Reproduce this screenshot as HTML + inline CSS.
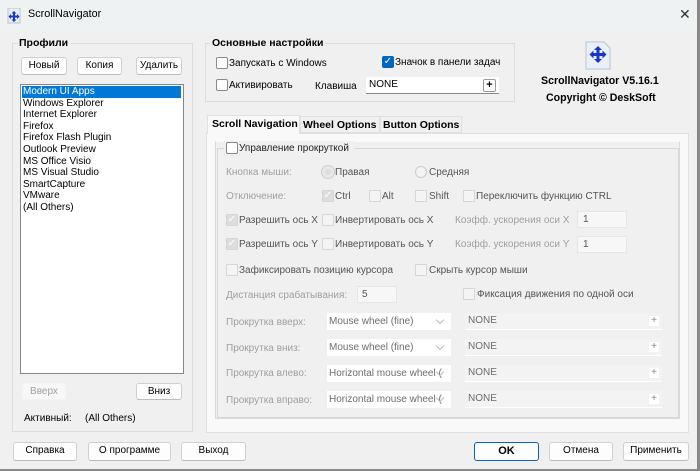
<!DOCTYPE html>
<html><head><meta charset="utf-8"><style>
*{box-sizing:border-box;margin:0;padding:0}
body{width:700px;height:471px;background:#f0f0f0;font-family:"Liberation Sans",sans-serif;font-size:10px;color:#000;position:relative;overflow:hidden}
.a{position:absolute;white-space:nowrap}
.btn{position:absolute;background:#fdfdfd;border:1px solid #d0d0d0;border-bottom-color:#bcbcbc;border-radius:3px;text-align:center;line-height:16px;font-size:10px}
.grp{position:absolute;border:1px solid #dcdcdc}
.lbl{position:absolute;background:#f0f0f0;font-weight:bold;font-size:10.5px;padding:0 2px}
.cb{position:absolute;width:12px;height:12px;border:1px solid #8a8a8a;background:#fff;border-radius:2px}
.cbd{position:absolute;width:12px;height:12px;border:1px solid #d6d6d6;background:#f4f4f4;border-radius:1px}
.g{color:#a0a0a0}
.d{color:#555}
.inp{position:absolute;background:#f7f7f7;border:1px solid #e6e6e6}
.combo{position:absolute;background:#fff;height:17px;width:124px;line-height:17px;padding-left:2px;color:#6d6d6d;overflow:hidden}
.combo:after{content:"";position:absolute;right:8px;top:4px;width:5px;height:5px;border-right:1px solid #bbb;border-bottom:1px solid #bbb;transform:rotate(45deg)}
.none{position:absolute;left:465px;width:197px;height:17px;background:#f3f3f3;border-bottom:1px solid #fff;line-height:16px;padding-left:3px;color:#6d6d6d}
.none b{position:absolute;right:3px;top:3px;width:10px;height:10px;background:#fff;font-weight:normal;font-size:10px;line-height:10px;text-align:center;color:#888}
.tab{position:absolute;font-weight:bold;font-size:10.5px}
</style></head><body>
<div class="a" style="left:0;top:0;width:700px;height:30px;background:#eef2f2"></div>
<svg class="a" style="left:7px;top:8px" width="14" height="16"><rect x="1" y="0" width="12" height="15" fill="#e8eef6" stroke="#b8c4d4"/><path d="M7 3l2.5 2.5h-1.5v2h2v-1.5l2.5 2.5-2.5 2.5v-1.5h-2v2h1.5L7 14l-2.5-2.5H6v-2H4v1.5L1.5 8.5 4 6v1.5h2v-2H4.5z" fill="#1637c8"/></svg>
<div class="a" style="left:28px;top:8px;font-size:10.8px">ScrollNavigator</div>
<div class="a" style="left:679px;top:6px;font-size:14px;color:#333">✕</div>
<div class="a" style="left:697px;top:0;width:3px;height:471px;background:#888"></div>
<div class="a" style="left:0;top:469px;width:700px;height:2px;background:#888"></div>

<div class="grp" style="left:12px;top:43px;width:181px;height:389px"></div>
<div class="lbl" style="left:17px;top:37px">Профили</div>
<div class="btn" style="left:21px;top:57px;width:46px;height:18px">Новый</div>
<div class="btn" style="left:77px;top:57px;width:45px;height:18px">Копия</div>
<div class="btn" style="left:136px;top:57px;width:46px;height:18px">Удалить</div>
<div class="a" style="left:20px;top:84px;width:164px;height:290px;background:#fff;border:1px solid #828790"></div>
<div class="a" style="left:22px;top:86px;width:159px;height:12px;background:#0078d7"></div>
<div class="a" style="left:23px;top:86px;line-height:11.6px">
<span style="color:#fff">Modern UI Apps</span><br>Windows Explorer<br>Internet Explorer<br>Firefox<br>Firefox Flash Plugin<br>Outlook Preview<br>MS Office Visio<br>MS Visual Studio<br>SmartCapture<br>VMware<br>(All Others)</div>
<div class="btn g" style="left:22px;top:383px;width:44px;height:17px;border-color:#f4f4f4;background:#f8f8f8">Вверх</div>
<div class="btn" style="left:136px;top:383px;width:46px;height:17px">Вниз</div>
<div class="a" style="left:24px;top:413px">Активный:</div>
<div class="a" style="left:85px;top:413px">(All Others)</div>

<div class="grp" style="left:205px;top:43px;width:310px;height:59px"></div>
<div class="lbl" style="left:210px;top:37px">Основные настройки</div>
<div class="cb" style="left:216px;top:57px"></div><div class="a" style="left:229px;top:58px">Запускать с Windows</div>
<div class="cb" style="left:216px;top:79px"></div><div class="a" style="left:229px;top:80px">Активировать</div>
<div class="a" style="left:315px;top:81px">Клавиша</div>
<div class="a" style="left:382px;top:56px;width:12px;height:12px;background:#0067c0;border-radius:2px;color:#fff;font-size:10px;line-height:12px;text-align:center">✓</div>
<div class="a" style="left:395px;top:57px">Значок в панели задач</div>
<div class="a" style="left:366px;top:77px;width:133px;height:17px;background:#fff;border-bottom:1px solid #888;line-height:16px;padding-left:3px">NONE</div>
<div class="a" style="left:483px;top:79px;width:13px;height:13px;border:1px solid #999;border-radius:2px;background:#fff;font-size:11px;line-height:11px;text-align:center;font-weight:bold">+</div>

<svg class="a" style="left:585px;top:41px" width="26" height="29"><path d="M1 1h18l6 6v21H1z" fill="#eaf0f8" stroke="#b8c4d4"/><path d="M13 5l4 4h-2.5v3h3V9.5l4 4-4 4V15h-3v3H17l-4 4-4-4h2.5v-3h-3v2.5l-4-4 4-4V12h3V9H9z" fill="#1637c8"/></svg>
<div class="a" style="left:541px;top:75px;font-weight:bold;font-size:10.6px">ScrollNavigator V5.16.1</div>
<div class="a" style="left:546px;top:92px;font-weight:bold;font-size:10.6px">Copyright © DeskSoft</div>

<div class="a" style="left:206px;top:133px;width:483px;height:300px;background:#f9f9f9;border:1px solid #e0e0e0"></div>
<div class="a" style="left:207px;top:115px;width:93px;height:19px;background:#f9f9f9;border:1px solid #e0e0e0;border-bottom:none"></div>
<div class="a" style="left:300px;top:116px;width:80px;height:17px;border:1px solid #e0e0e0"></div>
<div class="a" style="left:380px;top:116px;width:82px;height:17px;border:1px solid #e0e0e0"></div>
<div class="tab" style="left:212px;top:118px">Scroll Navigation</div>
<div class="tab" style="left:303px;top:119px">Wheel Options</div>
<div class="tab" style="left:383px;top:119px">Button Options</div>

<div class="a" style="left:215px;top:141px;width:465px;height:278px;background:#f0f0f0;border:1px solid #dadada;border-top-color:#f9f9f9"></div>
<div class="a" style="left:217px;top:148px;width:462px;height:270px;border:1px solid #d8d8d8"></div>
<div class="a" style="left:224px;top:141px;width:130px;height:14px;background:#f0f0f0"></div>
<div class="cb" style="left:226px;top:142px"></div><div class="a" style="left:239px;top:143px;color:#222">Управление прокруткой</div>

<div class="a g" style="left:226px;top:167px">Кнопка мыши:</div>
<div class="a" style="left:322px;top:166px;width:12px;height:12px;border-radius:50%;background:#ddd;border:3px solid #e8e8e8;box-shadow:0 0 0 1px #ccc"></div>
<div class="a d" style="left:335px;top:167px">Правая</div>
<div class="a" style="left:415px;top:166px;width:12px;height:12px;border-radius:50%;border:1px solid #ccc;background:#f4f4f4"></div>
<div class="a d" style="left:429px;top:167px">Средняя</div>

<div class="a g" style="left:226px;top:191px">Отключение:</div>
<div class="cbd" style="left:322px;top:190px;background:#ddd;color:#fff;font-size:10px;line-height:10px;text-align:center">✓</div><div class="a d" style="left:335px;top:191px">Ctrl</div>
<div class="cbd" style="left:369px;top:190px"></div><div class="a d" style="left:382px;top:191px">Alt</div>
<div class="cbd" style="left:415px;top:190px"></div><div class="a d" style="left:429px;top:191px">Shift</div>
<div class="cbd" style="left:463px;top:190px"></div><div class="a d" style="left:476px;top:191px">Переключить функцию CTRL</div>

<div class="cbd" style="left:226px;top:214px;background:#ddd;color:#fff;font-size:10px;line-height:10px;text-align:center">✓</div><div class="a d" style="left:239px;top:215px">Разрешить ось X</div>
<div class="cbd" style="left:322px;top:214px"></div><div class="a d" style="left:335px;top:215px">Инвертировать ось X</div>
<div class="a g" style="left:455px;top:215px">Коэфф. ускорения оси X</div>
<div class="inp d" style="left:577px;top:211px;width:50px;height:17px;padding:2px 5px">1</div>

<div class="cbd" style="left:226px;top:238px;background:#ddd;color:#fff;font-size:10px;line-height:10px;text-align:center">✓</div><div class="a d" style="left:239px;top:239px">Разрешить ось Y</div>
<div class="cbd" style="left:322px;top:238px"></div><div class="a d" style="left:335px;top:239px">Инвертировать ось Y</div>
<div class="a g" style="left:455px;top:239px">Коэфф. ускорения оси Y</div>
<div class="inp d" style="left:577px;top:236px;width:50px;height:17px;padding:2px 5px">1</div>

<div class="cbd" style="left:226px;top:264px"></div><div class="a d" style="left:239px;top:265px">Зафиксировать позицию курсора</div>
<div class="cbd" style="left:415px;top:264px"></div><div class="a d" style="left:429px;top:265px">Скрыть курсор мыши</div>

<div class="a g" style="left:226px;top:290px">Дистанция срабатывания:</div>
<div class="inp d" style="left:357px;top:286px;width:40px;height:17px;padding:2px 4px">5</div>
<div class="cbd" style="left:463px;top:288px"></div><div class="a d" style="left:477px;top:289px">Фиксация движения по одной оси</div>

<div class="a g" style="left:226px;top:317px">Прокрутка вверх:</div>
<div class="combo" style="left:327px;top:313px">Mouse wheel (fine)</div>
<div class="none" style="top:313px">NONE<b>+</b></div>
<div class="a g" style="left:226px;top:343px">Прокрутка вниз:</div>
<div class="combo" style="left:327px;top:339px">Mouse wheel (fine)</div>
<div class="none" style="top:339px">NONE<b>+</b></div>
<div class="a g" style="left:226px;top:368px">Прокрутка влево:</div>
<div class="combo" style="left:327px;top:365px">Horizontal mouse wheel (</div>
<div class="none" style="top:365px">NONE<b>+</b></div>
<div class="a g" style="left:226px;top:395px">Прокрутка вправо:</div>
<div class="combo" style="left:327px;top:391px">Horizontal mouse wheel (</div>
<div class="none" style="top:391px">NONE<b>+</b></div>

<div class="btn" style="left:13px;top:442px;width:64px;height:19px">Справка</div>
<div class="btn" style="left:88px;top:442px;width:83px;height:19px">О программе</div>
<div class="btn" style="left:181px;top:442px;width:65px;height:19px">Выход</div>
<div class="btn" style="left:474px;top:442px;width:65px;height:19px;border:1px solid #0067c0;font-weight:bold;font-size:11px">OK</div>
<div class="btn" style="left:549px;top:442px;width:64px;height:19px">Отмена</div>
<div class="btn" style="left:623px;top:442px;width:66px;height:19px">Применить</div>
</body></html>
